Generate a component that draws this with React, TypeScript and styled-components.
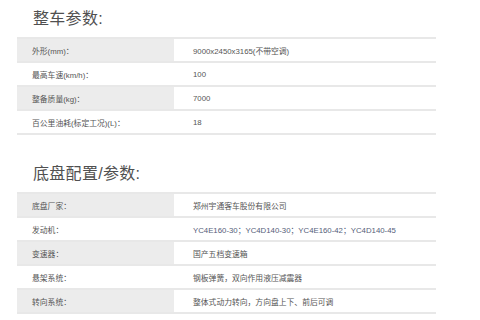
import styled, { createGlobalStyle } from "styled-components";

const GlobalStyle = createGlobalStyle`
  html, body {
    margin: 0;
    padding: 0;
    background: #ffffff;
    font-family: "Liberation Sans", "Noto Sans CJK SC", sans-serif;
  }
`;

const Page = styled.div`
  width: 480px;
  height: 320px;
  overflow: hidden;
  padding-left: 17px;
  box-sizing: border-box;
`;

const Section = styled.section<{ first?: boolean }>`
  width: 419px;
  margin-top: ${(props) => (props.first ? "0" : "20px")};
`;

const Title = styled.h2`
  margin: 0;
  height: 37px;
  padding: 9px 0 0 16px;
  box-sizing: border-box;
  font-size: 16px;
  line-height: 20px;
  font-weight: normal;
  color: #505050;
  letter-spacing: 0.3px;
`;

const Table = styled.div`
  border-top: 2px solid #e8e8e8;
`;

const Row = styled.div`
  display: flex;
  height: 22px;
  border-bottom: 2px solid #e8e8e8;
`;

const Label = styled.div<{ shaded: boolean }>`
  width: 157px;
  flex: none;
  display: flex;
  align-items: center;
  padding-left: 15px;
  box-sizing: border-box;
  background: ${(props) => (props.shaded ? "#ececec" : "#ffffff")};
  font-size: 7.8px;
  color: #555;
`;

const Value = styled.div<{ code?: boolean }>`
  flex: 1;
  display: flex;
  align-items: center;
  padding-left: 19px;
  font-size: 7.8px;
  color: ${(props) => (props.code ? "#56607a" : "#555")};
  white-space: nowrap;
`;

interface Item {
  label: string;
  value: string;
  code?: boolean;
}

const vehicle: Item[] = [
  { label: "外形(mm)：", value: "9000x2450x3165(不带空调)" },
  { label: "最高车速(km/h)：", value: "100" },
  { label: "整备质量(kg)：", value: "7000" },
  { label: "百公里油耗(标定工况)(L)：", value: "18" },
];

const chassis: Item[] = [
  { label: "底盘厂家：", value: "郑州宇通客车股份有限公司" },
  {
    label: "发动机：",
    value: "YC4E160-30；YC4D140-30；YC4E160-42；YC4D140-45",
    code: true,
  },
  { label: "变速器：", value: "国产五档变速箱" },
  { label: "悬架系统：", value: "钢板弹簧，双向作用液压减震器" },
  { label: "转向系统：", value: "整体式动力转向，方向盘上下、前后可调" },
];

function ParamTable({ items }: { items: Item[] }) {
  return (
    <Table>
      {items.map((item, i) => (
        <Row key={item.label}>
          <Label shaded={i % 2 === 0}>{item.label}</Label>
          <Value code={item.code}>{item.value}</Value>
        </Row>
      ))}
    </Table>
  );
}

export default function App() {
  return (
    <Page>
      <GlobalStyle />
      <Section first>
        <Title>整车参数:</Title>
        <ParamTable items={vehicle} />
      </Section>
      <Section>
        <Title>底盘配置/参数:</Title>
        <ParamTable items={chassis} />
      </Section>
    </Page>
  );
}
